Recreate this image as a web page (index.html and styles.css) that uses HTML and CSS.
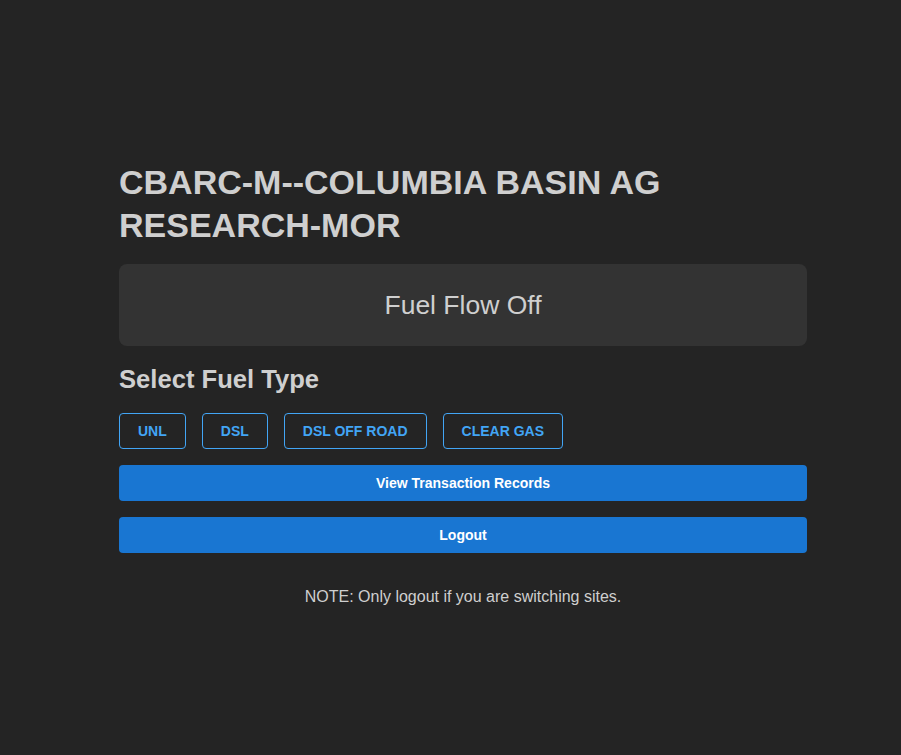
FILE: index.html
```html
<!DOCTYPE html>
<html lang="en">
<head>
<meta charset="utf-8">
<title>Fuel</title>
<link rel="stylesheet" href="styles.css">
</head>
<body>
<main class="page">
  <h1 class="site-title">CBARC-M--COLUMBIA BASIN AG RESEARCH-MOR</h1>
  <div class="status-panel">Fuel Flow Off</div>
  <h2 class="section-title">Select Fuel Type</h2>
  <div class="fuel-row">
    <button class="fuel-btn">UNL</button>
    <button class="fuel-btn">DSL</button>
    <button class="fuel-btn">DSL OFF ROAD</button>
    <button class="fuel-btn">CLEAR GAS</button>
  </div>
  <button class="action-btn">View Transaction Records</button>
  <button class="action-btn">Logout</button>
  <p class="note">NOTE: Only logout if you are switching sites.</p>
</main>
</body>
</html>
```
FILE: styles.css
```css
html, body {
  margin: 0;
  padding: 0;
  background: #242424;
  height: 100%;
}
body {
  font-family: "Liberation Sans", Arial, sans-serif;
  color: #cfcfcf;
}
.page {
  width: 688px;
  margin: 0 0 0 119px;
  padding-top: 161px;
  display: flex;
  flex-direction: column;
}
.site-title {
  margin: 0 0 17px;
  font-size: 34px;
  line-height: 43px;
  font-weight: 700;
  color: #cfcfcf;
}
.status-panel {
  height: 82px;
  background: #333333;
  border-radius: 8px;
  display: flex;
  align-items: center;
  justify-content: center;
  font-size: 26.5px;
  color: #cfcfcf;
}
.section-title {
  margin: 18px 0 19px;
  font-size: 25.6px;
  line-height: 30px;
  font-weight: 700;
  color: #cfcfcf;
}
.fuel-row {
  display: flex;
  gap: 16px;
  margin-bottom: 16px;
}
.fuel-btn {
  height: 36px;
  padding: 0 18px;
  background: transparent;
  border: 1px solid #42a5f5;
  border-radius: 4px;
  color: #42a5f5;
  font-family: "Liberation Sans", Arial, sans-serif;
  font-size: 14px;
  font-weight: 700;
  cursor: pointer;
}
.action-btn {
  height: 36px;
  margin-bottom: 16px;
  width: 100%;
  background: #1976d2;
  border: none;
  border-radius: 4px;
  color: #ffffff;
  font-family: "Liberation Sans", Arial, sans-serif;
  font-size: 14px;
  font-weight: 700;
  cursor: pointer;
}
.note {
  margin: 18px 0 0;
  text-align: center;
  font-size: 16px;
  line-height: 20px;
  color: #cfcfcf;
}
```
